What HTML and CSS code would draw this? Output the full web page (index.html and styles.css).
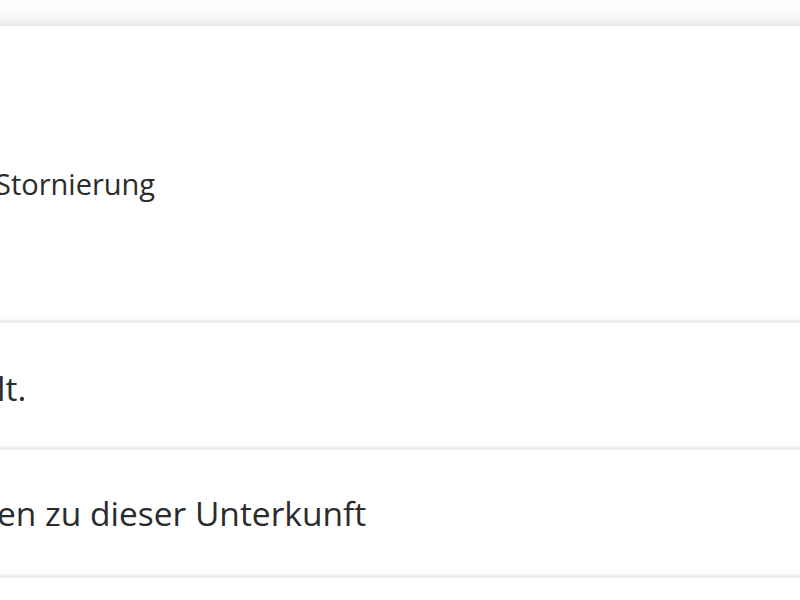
FILE: index.html
```html
<!DOCTYPE html>
<html lang="de">
<head>
<meta charset="utf-8">
<title>Unterkunft</title>
<link rel="stylesheet" href="styles.css">
</head>
<body>
<div class="page">
  <div class="topband"></div>
  <ul class="list">
    <li class="row row-tall"><span class="label label-small">Stornierung</span></li>
    <li class="row row-mid"><span class="label">lt.</span></li>
    <li class="row row-last"><span class="label">en zu dieser Unterkunft</span></li>
  </ul>
</div>
</body>
</html>
```
FILE: styles.css
```css
html, body {
  margin: 0;
  padding: 0;
  background: #ffffff;
}
.page {
  width: 800px;
  height: 600px;
  overflow: hidden;
  font-family: "Open Sans", "Noto Sans", sans-serif;
  color: #2b2b2b;
}
.topband {
  height: 26px;
  background: linear-gradient(#ffffff 0%, #fafafa 55%, #efefef 85%, #e6e6e6 100%);
}
.list {
  list-style: none;
  margin: 0;
  padding: 0;
}
.row {
  box-sizing: border-box;
  display: flex;
  align-items: center;
  height: 127px;
  border-bottom: 3px solid #ededed;
  box-shadow: inset 0 -8px 8px -8px #f2f2f2;
  overflow: hidden;
}
.row-tall {
  height: 297px;
  padding-top: 20px;
}
.row-mid {
  padding-top: 5px;
}
.row-last {
  height: 128px;
}
.label {
  font-size: 33.5px;
  margin-left: -3px;
  white-space: nowrap;
}
.label-small {
  font-size: 29px;
  margin-left: -5px;
}
```
